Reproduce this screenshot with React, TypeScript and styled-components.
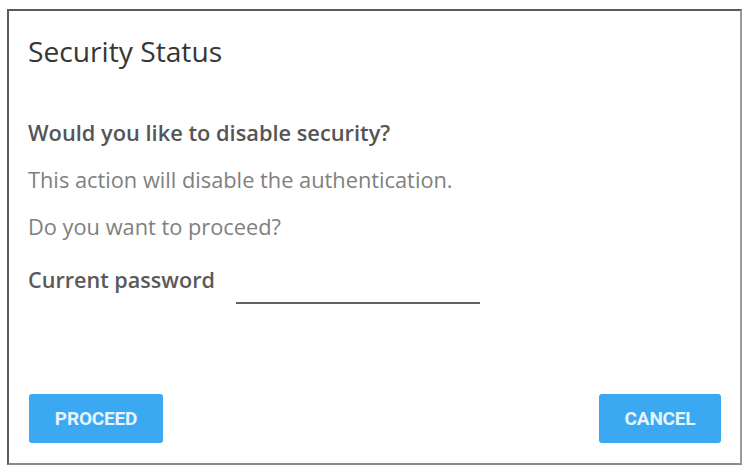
import React from "react";
import styled, { createGlobalStyle } from "styled-components";

const GlobalStyle = createGlobalStyle`
  body {
    margin: 0;
    background: #ffffff;
    font-family: "Open Sans", "Noto Sans", sans-serif;
  }
`;

const Dialog = styled.div`
  box-sizing: border-box;
  margin: 9px 0 0 7px;
  width: 735px;
  height: 456px;
  border-top: 2px solid #5a5a5a;
  border-left: 2px solid #5a5a5a;
  border-right: 2px solid #9a9a9a;
  border-bottom: 2px solid #8a8a8a;
  background: #fff;
  display: flex;
  flex-direction: column;
  padding: 0 19px 0 19px;
`;

const Title = styled.h1`
  margin: 22px 0 0;
  font-size: 28.2px;
  font-weight: 400;
  color: #363636;
  line-height: 36px;
`;

const Body = styled.div`
  display: flex;
  flex-direction: column;
  margin-top: 51px;
`;

const Line = styled.p<{ $strong?: boolean }>`
  margin: 0;
  height: 47px;
  font-size: 21.8px;
  line-height: 26px;
  font-weight: ${(p) => (p.$strong ? 600 : 400)};
  color: ${(p) => (p.$strong ? "#555" : "#808080")};
`;

const FieldRow = styled.label`
  display: flex;
  align-items: flex-start;
  gap: 21px;
  margin-top: 6px;
`;

const FieldLabel = styled.span`
  font-size: 21.6px;
  font-weight: 600;
  color: #5a5a5a;
  line-height: 26px;
`;

const Input = styled.input`
  box-sizing: border-box;
  width: 244px;
  height: 30px;
  margin-top: 7px;
  padding: 0;
  border: none;
  border-bottom: 2px solid #606060;
  outline: none;
  background: transparent;
`;

const Footer = styled.div`
  margin-top: auto;
  margin-bottom: 20px;
  display: flex;
  justify-content: space-between;
  padding-left: 1px;
`;

const Button = styled.button<{ $w: number }>`
  width: ${(p) => p.$w}px;
  height: 49px;
  border: none;
  border-radius: 3px;
  background: #3aa9f2;
  color: #e6f4ff;
  font-family: "Roboto", "Liberation Sans", sans-serif;
  font-weight: 700;
  font-size: 19px;
  letter-spacing: -0.2px;
  cursor: pointer;
`;

export default function App() {
  return (
    <>
      <GlobalStyle />
      <Dialog>
        <Title>Security Status</Title>
        <Body>
          <Line $strong>Would you like to disable security?</Line>
          <Line>This action will disable the authentication.</Line>
          <Line>Do you want to proceed?</Line>
          <FieldRow>
            <FieldLabel>Current password</FieldLabel>
            <Input type="password" />
          </FieldRow>
        </Body>
        <Footer>
          <Button $w={134}>PROCEED</Button>
          <Button $w={122}>CANCEL</Button>
        </Footer>
      </Dialog>
    </>
  );
}
